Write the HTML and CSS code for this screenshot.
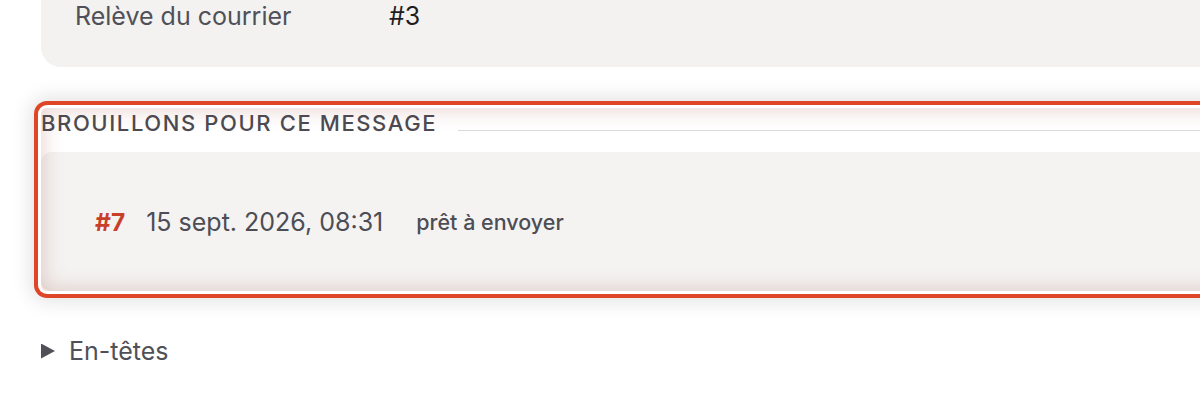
FILE: index.html
```html
<!DOCTYPE html>
<html lang="fr">
<head>
<meta charset="utf-8">
<title>Message</title>
<link rel="stylesheet" href="styles.css">
</head>
<body>
<main class="page">
  <div class="meta">
    <div class="meta-row">
      <span class="meta-label">Relève du courrier</span>
      <span class="meta-value">#3</span>
    </div>
  </div>

  <section class="drafts">
    <h2 class="drafts-title">Brouillons pour ce message</h2>
    <div class="draft">
      <span class="draft-id">#7</span>
      <span class="draft-date">15 sept. 2026, 08:31</span>
      <span class="draft-status">prêt à envoyer</span>
    </div>
  </section>

  <details class="headers">
    <summary>En-têtes</summary>
  </details>
</main>
</body>
</html>
```

FILE: styles.css
```css
html {
  overflow: hidden;
}

body {
  margin: 0;
  background: #ffffff;
  font-family: Inter, "Noto Sans", sans-serif;
  color: #505058;
}

.page {
  width: 1300px;
  padding-left: 41px;
}

.meta {
  margin-top: -40px;
  padding: 38px 34px 33px;
  background: #f3f2f0;
  border-radius: 20px;
}

.meta-row {
  display: grid;
  grid-template-columns: 314px auto;
  font-size: 25px;
  line-height: 36px;
}

.meta-value {
  color: #1e1e22;
}

.drafts {
  margin-top: 41px;
  background: #ffffff;
  border-radius: 6px;
  box-shadow:
    0 0 0 3px #ffffff,
    0 0 0 7px #df4527,
    0 0 20px 10px rgba(0, 0, 0, 0.12),
    inset 0 0 22px rgba(150, 60, 40, 0.25);
}

.drafts-title {
  display: flex;
  align-items: baseline;
  gap: 21px;
  margin: 0;
  padding-top: 1px;
  font-size: 22px;
  line-height: 28px;
  font-weight: 500;
  letter-spacing: 1.6px;
  text-transform: uppercase;
  color: #4c4a50;
}

.drafts-title::after {
  content: "";
  flex: 1;
  height: 1px;
  background: #d9d9d9;
}

.draft {
  display: flex;
  align-items: center;
  min-height: 139px;
  box-sizing: border-box;
  margin-top: 15px;
  padding: 0 54px;
  background: rgba(60, 40, 10, 0.055);
  border-radius: 10px;
}

.draft-id {
  margin-right: 21px;
  font-size: 24.5px;
  font-weight: 700;
  color: #c9402a;
}

.draft-date {
  margin-right: 33px;
  font-size: 25px;
  color: #4d4d55;
}

.draft-status {
  font-size: 21.5px;
  font-weight: 500;
  color: #4d4d55;
}

.headers {
  margin-top: 42px;
  font-size: 25px;
  line-height: 36px;
  color: #505058;
}

.headers summary {
  display: flex;
  align-items: center;
  gap: 14px;
  list-style: none;
  cursor: pointer;
}

.headers summary::-webkit-details-marker {
  display: none;
}

.headers summary::before {
  content: "";
  flex: none;
  width: 14px;
  height: 15px;
  background: #505058;
  clip-path: polygon(0 0, 100% 50%, 0 100%);
}
```
